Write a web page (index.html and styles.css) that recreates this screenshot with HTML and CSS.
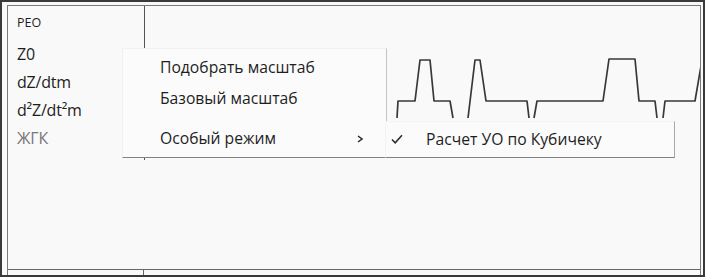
FILE: index.html
```html
<!DOCTYPE html>
<html lang="ru">
<head>
<meta charset="utf-8">
<title>РЕО</title>
<link rel="stylesheet" href="styles.css">
</head>
<body>
<div class="window">
  <div class="inner">
    <div class="main">
      <div class="sidebar">
        <div class="title">РЕО</div>
        <div class="label">Z0</div>
        <div class="label">dZ/dtm</div>
        <div class="label">d²Z/dt²m</div>
        <div class="label muted">ЖГК</div>
      </div>
      <div class="plot">
        <svg class="wave" viewBox="144 6 556 263" width="556" height="263">
          <line class="axis" x1="144.5" y1="6" x2="144.5" y2="160"/>
          <polyline points="397,118 398,101 415,101 420,60 430,60 434,101 450,101 453,118"/>
          <polyline points="468,118 475,60 480,60 486,101 527,101 529,118"/>
          <polyline points="534,118 537,101 603,101 609,59 635,59 639,101 655,101 657,118"/>
          <polyline points="663,118 665,101 695,101 702,60"/>
        </svg>
      </div>
    </div>
    <div class="status">
      <div class="status-cell"></div>
    </div>
  </div>

  <div class="menu">
    <div class="item">Подобрать масштаб</div>
    <div class="item">Базовый масштаб</div>
    <div class="gap"></div>
    <div class="item has-sub">
      <span>Особый режим</span>
      <svg class="chev" viewBox="0 0 6 8" width="6" height="8"><polyline points="1,1 5,4 1,7"/></svg>
    </div>
  </div>

  <div class="submenu">
    <div class="item checked">
      <svg class="check" viewBox="0 0 12 10" width="12" height="10"><polyline points="1,5.5 4.2,8.8 11,1.2"/></svg>
      <span>Расчет УО по Кубичеку</span>
    </div>
  </div>
</div>
</body>
</html>
```
FILE: styles.css
```css
* { box-sizing: border-box; }

html, body {
  margin: 0;
  padding: 0;
  background: #f9f9f9;
}

body {
  font-family: "Open Sans", "Liberation Sans", sans-serif;
  color: #1e1e1e;
}

.window {
  position: relative;
  width: 705px;
  height: 277px;
  border: 2px solid #3a3a3a;
  padding: 3px 2px 0 5px;
  background: #f9f9f9;
}

.inner {
  height: 270px;
  border: 1px solid #7a7a7a;
  border-bottom: 0;
  display: flex;
  flex-direction: column;
}

.main {
  flex: 1;
  display: grid;
  grid-template-columns: 136px 1fr;
  min-height: 0;
  background: #f9f9f9;
}

.sidebar {
  padding: 9px 0 0 9px;
}

.title {
  font-size: 12.5px;
  line-height: 16px;
  margin-bottom: 9px;
}

.label {
  font-size: 16px;
  line-height: 28px;
  letter-spacing: -0.2px;
}

.label.muted {
  color: #777;
}

.plot {
  min-width: 0;
  background: #f9f9f9;
}

.wave {
  display: block;
  overflow: hidden;
}

.wave .axis {
  stroke: #555;
  stroke-width: 1;
}

.wave polyline {
  fill: none;
  stroke: #383838;
  stroke-width: 1.7;
  stroke-linejoin: round;
}

.status {
  flex: none;
  height: 6px;
  border-top: 1px solid #666;
  display: flex;
}

.status-cell {
  width: 136px;
  border-right: 1px solid #666;
}

/* context menu overlay */
.menu {
  position: absolute;
  left: 120px;
  top: 46px;
  width: 265px;
  height: 110px;
  background: #fbfbfb;
  border: 1px solid #f1f1f1;
  border-right-color: #c4c4c4;
  border-bottom-color: #808080;
  padding: 3px 0;
  font-size: 15.7px;
  color: #1e1e1e;
}

.menu .item {
  height: 31px;
  line-height: 31px;
  padding: 0 23px 0 37px;
  display: flex;
  justify-content: space-between;
  align-items: center;
}

.menu .gap {
  height: 9px;
}

.chev polyline,
.check polyline {
  fill: none;
  stroke: #2a2a2a;
  stroke-width: 1.5;
}

.submenu {
  position: absolute;
  left: 383px;
  top: 119px;
  width: 290px;
  height: 37px;
  background: #fbfbfb;
  border: 1px solid #f3f3f3;
  border-right-color: #a8a8a8;
  border-bottom-color: #808080;
  padding: 1px 0 4px;
  font-size: 15.7px;
  color: #1e1e1e;
}

.submenu .item {
  height: 31px;
  display: flex;
  align-items: center;
  padding-left: 5px;
}

.submenu .check {
  margin-right: 23px;
}
```
